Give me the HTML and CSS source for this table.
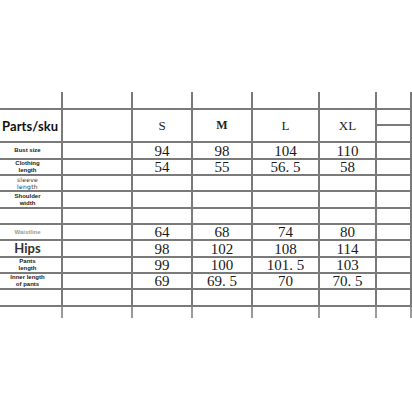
FILE: index.html
```html
<!DOCTYPE html>
<html>
<head>
<meta charset="utf-8">
<link rel="stylesheet" href="styles.css">
</head>
<body>
<div class="page">
  <table class="sizes">
    <colgroup>
      <col class="c0"><col class="c1"><col class="c2"><col class="c3"><col class="c4"><col class="c5"><col class="c6">
    </colgroup>
    <tr class="r-top"><td></td><td></td><td></td><td></td><td></td><td></td><td></td></tr>
    <tr class="r-h1">
      <td rowspan="2" class="parts">Parts/sku</td>
      <td rowspan="2"></td>
      <td rowspan="2" class="sz">S</td>
      <td rowspan="2" class="sz szm">M</td>
      <td rowspan="2" class="sz">L</td>
      <td rowspan="2" class="sz">XL</td>
      <td></td>
    </tr>
    <tr class="r-h2"><td></td></tr>
    <tr class="r17"><td class="lab">Bust size</td><td></td><td class="num">94</td><td class="num">98</td><td class="num">104</td><td class="num">110</td><td></td></tr>
    <tr class="r16"><td class="lab">Clothing<br>length</td><td></td><td class="num">54</td><td class="num">55</td><td class="num">56. 5</td><td class="num">58</td><td></td></tr>
    <tr class="r16"><td class="lab hand">sleeve<br>length</td><td></td><td></td><td></td><td></td><td></td><td></td></tr>
    <tr class="r17"><td class="lab">Shoulder<br>width</td><td></td><td></td><td></td><td></td><td></td><td></td></tr>
    <tr class="r16"><td></td><td></td><td></td><td></td><td></td><td></td><td></td></tr>
    <tr class="r16"><td class="lab waist">Waistline</td><td></td><td class="num">64</td><td class="num">68</td><td class="num">74</td><td class="num">80</td><td></td></tr>
    <tr class="r17"><td class="lab hips">Hips</td><td></td><td class="num">98</td><td class="num">102</td><td class="num">108</td><td class="num">114</td><td></td></tr>
    <tr class="r16"><td class="lab">Pants<br>length</td><td></td><td class="num">99</td><td class="num">100</td><td class="num">101. 5</td><td class="num">103</td><td></td></tr>
    <tr class="r16"><td class="lab">Inner length<br>of pants</td><td></td><td class="num">69</td><td class="num">69. 5</td><td class="num">70</td><td class="num">70. 5</td><td></td></tr>
    <tr class="r17"><td></td><td></td><td></td><td></td><td></td><td></td><td></td></tr>
    <tr class="r-bot"><td></td><td></td><td></td><td></td><td></td><td></td><td></td></tr>
  </table>
</div>
</body>
</html>
```
FILE: styles.css
```css
html, body {
  margin: 0;
  padding: 0;
  background: #ffffff;
}
.page {
  width: 412px;
  height: 412px;
  padding-top: 92px;
  box-sizing: border-box;
  overflow: hidden;
}
.sizes {
  border-collapse: collapse;
  table-layout: fixed;
  width: 411px;
}
.c0 { width: 62px; }
.c1 { width: 70px; }
.c2 { width: 60px; }
.c3 { width: 60px; }
.c4 { width: 67px; }
.c5 { width: 57px; }
.c6 { width: 35px; }
.sizes td {
  border: 2px solid #7a7a7a;
  padding: 0;
  text-align: center;
  vertical-align: middle;
  color: #222;
  white-space: nowrap;
}
.sizes tr td:first-child { border-left: none; }
.r-h2 td:first-child { border-left: 2px solid #7a7a7a; }
.r-top td { border-top: none; }
.r-bot td { border-bottom: none; border-color: #9a9a9a; }
.r-top { height: 17px; }
.r-h1 { height: 16px; }
.r-h2 { height: 17px; }
.r17 { height: 17px; }
.r16 { height: 16px; }
.r-bot { height: 12px; }
.parts {
  text-align: left !important;
  padding-left: 2px !important;
  font-family: Lato, "Open Sans", sans-serif;
  font-weight: 700;
  font-size: 13px;
  letter-spacing: 0.1px;
  color: #111 !important;
}
.sz {
  font-family: "Liberation Serif", "DejaVu Serif", serif;
  font-size: 13px;
  color: #222;
}
.szm { font-weight: 700; font-size: 12px; }
.num {
  font-family: "Liberation Serif", "DejaVu Serif", serif;
  font-size: 15px;
  line-height: 14px;
  color: #1a1a1a !important;
}
.lab {
  font-family: "Liberation Sans", Arial, sans-serif;
  font-weight: 700;
  font-size: 6px;
  line-height: 7px;
  color: #222 !important;
  padding-right: 6px !important;
}
.hand {
  font-family: "DejaVu Sans", sans-serif;
  font-weight: 400;
  font-size: 6px;
  line-height: 7px;
  color: #333 !important;
  letter-spacing: 0.3px;
}
.waist {
  color: #9a9a9a !important;
  font-size: 6px;
}
.hips {
  font-family: Lato, "Open Sans", sans-serif;
  font-size: 13px;
  line-height: 13px;
  color: #333 !important;
}
```
